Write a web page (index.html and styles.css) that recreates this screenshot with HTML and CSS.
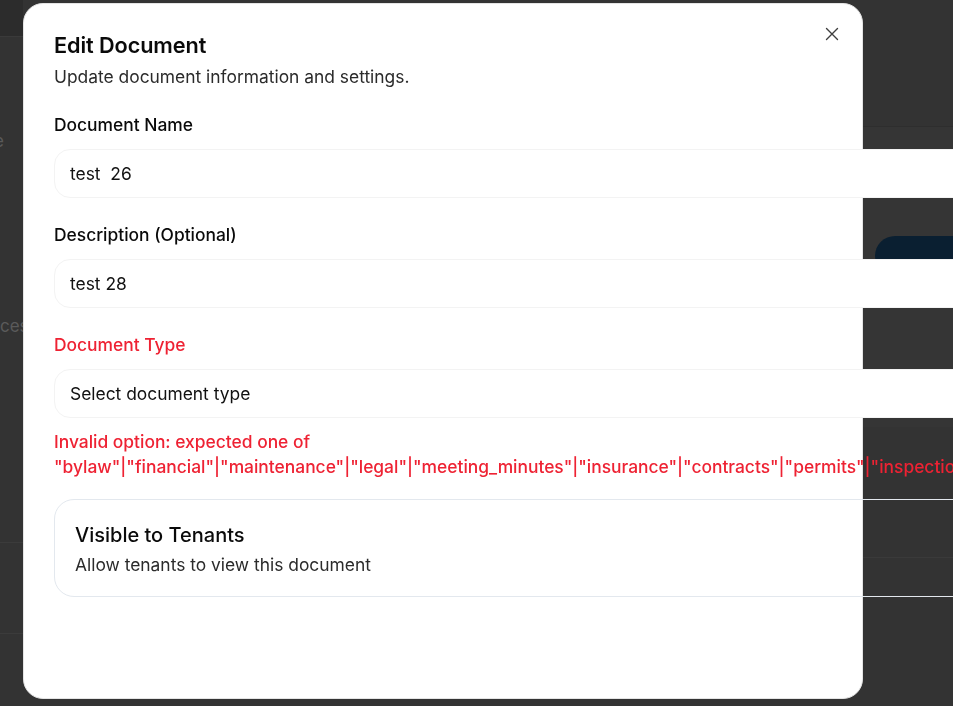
FILE: index.html
```html
<!DOCTYPE html>
<html lang="en">
<head>
<meta charset="utf-8">
<title>Edit Document</title>
<link rel="stylesheet" href="styles.css">
</head>
<body>
<div class="page">
  <div class="layout">
    <aside class="side">
      <div class="side-head"></div>
      <div class="side-item side-item-first">e</div>
      <div class="side-item side-item-second">ces</div>
      <div class="side-rule"></div>
      <div class="side-rule side-rule-2"></div>
    </aside>
    <main class="center"></main>
    <section class="right">
      <div class="r-head"></div>
      <div class="r-panel">
        <div class="r-btn"></div>
      </div>
      <div class="r-row"></div>
    </section>
  </div>
</div>

<div class="modal" role="dialog">
  <button class="close" aria-label="Close">
    <svg width="16" height="16" viewBox="0 0 16 16"><path d="M2.5 2.5 L13.5 13.5 M13.5 2.5 L2.5 13.5" stroke="#3f3f3f" stroke-width="1.4" fill="none" stroke-linecap="round"/></svg>
  </button>
  <h2 class="title">Edit Document</h2>
  <p class="subtitle">Update document information and settings.</p>

  <div class="field">
    <label class="label">Document Name</label>
    <div class="input">test&nbsp; 26</div>
  </div>

  <div class="field">
    <label class="label">Description (Optional)</label>
    <div class="input">test 28</div>
  </div>

  <div class="field">
    <label class="label label-error">Document Type</label>
    <div class="input">Select document type</div>
    <p class="error">Invalid option: expected one of "bylaw"|"financial"|"maintenance"|"legal"|"meeting_minutes"|"insurance"|"contracts"|"permits"|"inspection"|"other"</p>
  </div>

  <div class="switch-card">
    <div class="switch-title">Visible to Tenants</div>
    <div class="switch-desc">Allow tenants to view this document</div>
  </div>
</div>
</body>
</html>
```

FILE: styles.css
```css
* { box-sizing: border-box; }

html, body {
  margin: 0;
  padding: 0;
  width: 953px;
  height: 706px;
  overflow: hidden;
}

body {
  font-family: Inter, "Noto Sans", "Liberation Sans", sans-serif;
  background: #333333;
  color: #0a0a0a;
}

.page { height: 706px; }

.layout {
  height: 706px;
  display: flex;
}

.side {
  width: 23px;
  flex: none;
  display: flex;
  flex-direction: column;
  overflow: hidden;
  font-size: 17px;
  color: #5a5a5a;
}

.side-head {
  height: 37px;
  background: #2c2c2c;
  border-bottom: 1px solid #3a3a3a;
}

.side-item { white-space: nowrap; line-height: 20px; }
.side-item-first { margin-top: 94px; margin-left: -6px; }
.side-item-second { margin-top: 165px; }

.side-rule { height: 1px; background: #3b3b3b; margin-top: 206px; }
.side-rule-2 { margin-top: 90px; }

.center { width: 839px; flex: none; }

.right {
  flex: 1;
  display: flex;
  flex-direction: column;
}

.r-head {
  height: 127px;
  border-bottom: 1px solid #2e2e2e;
}

.r-panel {
  background: #353535;
  padding-top: 109px;
  padding-left: 13px;
  height: 300px;
}

.r-btn {
  width: 120px;
  height: 40px;
  border-radius: 20px;
  background: #0a1f31;
}

.r-row {
  border-top: 1px solid #3a3a3a;
  margin-top: 130px;
}

.modal {
  position: fixed;
  left: 23px;
  top: 3px;
  width: 840px;
  height: 696px;
  background: #ffffff;
  border: 1px solid #e4e4e4;
  border-radius: 20px;
  padding: 27px 30px;
}

.close {
  position: absolute;
  top: 22px;
  right: 22px;
  width: 16px;
  height: 16px;
  padding: 0;
  border: none;
  background: none;
  display: flex;
}

.title {
  margin: 0;
  font-size: 21.7px;
  line-height: 28px;
  font-weight: 600;
  color: #0a0a0a;
  letter-spacing: -0.1px;
}

.subtitle {
  margin: 6px 0 0;
  font-size: 17.4px;
  line-height: 24px;
  color: #2b2b2b;
}

.field {
  margin-top: 24px;
  display: flex;
  flex-direction: column;
}

.field + .field { margin-top: 25px; }

.label {
  font-size: 17.4px;
  line-height: 24px;
  font-weight: 500;
  color: #0a0a0a;
}

.label-error { color: #ee2233; }

.input {
  margin-top: 12px;
  width: 1000px;
  height: 49px;
  border: 1px solid #f3f3f3;
  border-radius: 16px;
  background: #ffffff;
  padding: 0 15px;
  display: flex;
  align-items: center;
  font-size: 17.4px;
  color: #111111;
}

.error {
  margin: 11px 0 0;
  font-size: 17.4px;
  line-height: 25px;
  font-weight: 500;
  color: #ee2233;
  width: 777px;
}

.switch-card {
  margin-top: 20px;
  width: 1000px;
  height: 98px;
  border: 1px solid #e3e8ee;
  border-radius: 20px;
  padding: 21px 20px 19px;
}

.switch-title {
  font-size: 20px;
  line-height: 28px;
  font-weight: 500;
  color: #0a0a0a;
}

.switch-desc {
  margin-top: 4px;
  font-size: 17.4px;
  line-height: 24px;
  color: #2b2b2b;
}
```
